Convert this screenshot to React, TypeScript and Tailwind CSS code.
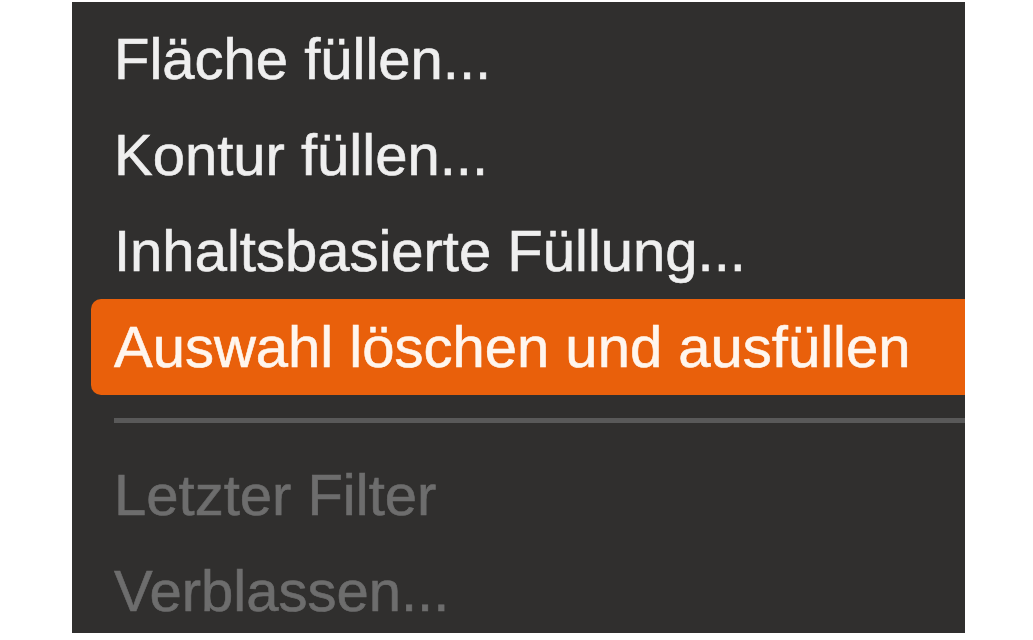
import React from "react";

const items = [
  { label: "Fläche füllen...", state: "normal" },
  { label: "Kontur füllen...", state: "normal" },
  { label: "Inhaltsbasierte Füllung...", state: "normal" },
  { label: "Auswahl löschen und ausfüllen", state: "active" },
];

const disabled = ["Letzter Filter", "Verblassen..."];

export default function App() {
  return (
    <div className="w-[1033px] h-[640px] bg-white overflow-hidden" style={{ fontFamily: '"Liberation Sans", Arial, sans-serif' }}>
      <div className="ml-[72px] mt-[2px] w-[893px] h-[631px] bg-[#302f2e] overflow-hidden pt-[9px]">
        {items.map((it) => (
          <div
            key={it.label}
            className={
              "ml-[19px] h-[96px] leading-[96px] pl-[23px] text-[58px] whitespace-nowrap rounded-l-[10px] [-webkit-text-stroke:0.6px_currentColor] " +
              (it.state === "active" ? "bg-[#e9600b] text-[#fff6ee]" : "text-[#efefef]")
            }
          >
            {it.label}
          </div>
        ))}
        <div className="ml-[42px] mt-[23px] h-[5px] bg-[#595959]" />
        <div className="mt-[24px]">
          {disabled.map((d) => (
            <div key={d} className="ml-[19px] h-[96px] leading-[96px] pl-[23px] text-[58px] whitespace-nowrap text-[#6d6d6d] [-webkit-text-stroke:0.6px_currentColor]">
              {d}
            </div>
          ))}
        </div>
      </div>
    </div>
  );
}
